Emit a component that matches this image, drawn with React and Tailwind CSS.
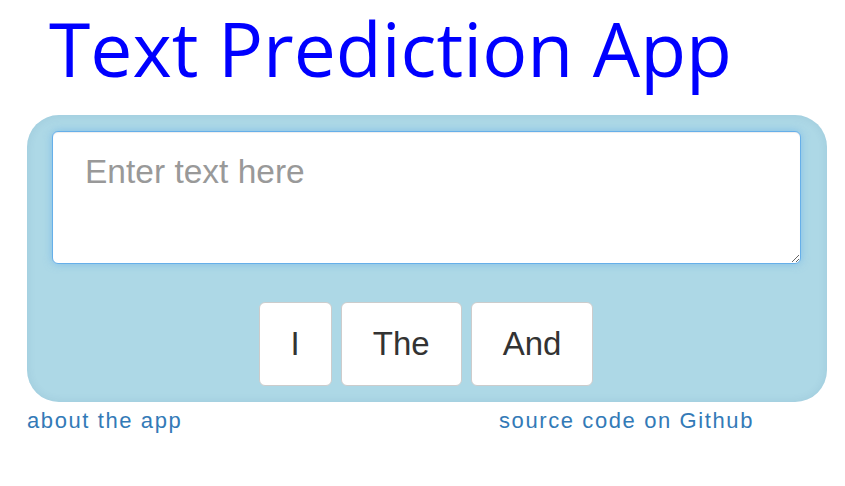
export default function App() {
  return (
    <div className="w-[845px] h-[486px] bg-white overflow-hidden" style={{ fontFamily: '"Liberation Sans", Arial, sans-serif' }}>
      <h1 className="ml-[49px] -mt-[8px] text-[75px] leading-normal text-[#0000ff] font-normal" style={{ fontFamily: '"Open Sans", "Noto Sans", sans-serif' }}>
        Text Prediction App
      </h1>
      <div className="ml-[27px] mt-[10px] w-[800px] rounded-[32px] bg-[#add8e6] pt-4 pb-4 px-[25px] shadow-[inset_0_0_10px_rgba(0,70,120,0.09)]">
        <textarea
          placeholder="Enter text here"
          className="block w-[749px] h-[133px] rounded-[6px] border border-[#66afe9] bg-white px-[32px] pt-4 text-[33.5px] leading-[1.42857] text-[#555] placeholder:text-[#999] outline-none shadow-[inset_0_1px_1px_rgba(0,0,0,0.075),0_0_8px_rgba(102,175,233,0.6)]"
          style={{ fontFamily: '"Liberation Sans", Arial, sans-serif' }}
        />
        <div className="mt-[38px] flex justify-center gap-[9px] pr-[2px]">
          {["I", "The", "And"].map((w) => (
            <button
              key={w}
              className="h-[84px] flex items-center justify-center px-[31px] rounded-[6px] border border-[#ccc] bg-white text-[33px] text-[#333]"
              style={{ fontFamily: '"Liberation Sans", Arial, sans-serif' }}
            >
              {w}
            </button>
          ))}
        </div>
      </div>
      <div className="ml-[27px] mt-[3px] flex text-[22px] leading-[1.42857] text-[#337ab7] tracking-[1.6px]">
        <a className="w-[472px]">about the app</a>
        <a>source code on Github</a>
      </div>
    </div>
  );
}
